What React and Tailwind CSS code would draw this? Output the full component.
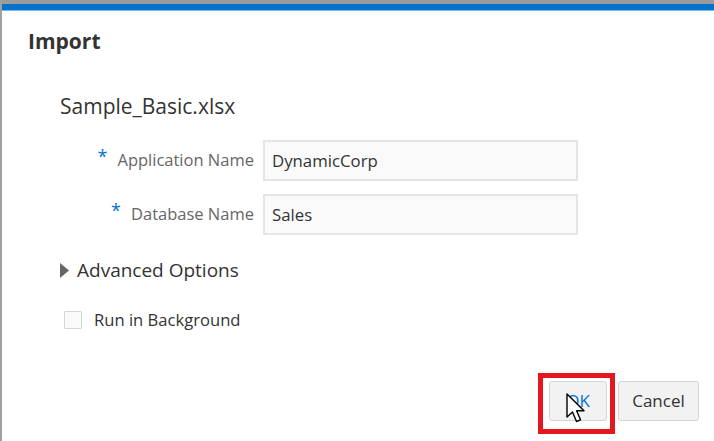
import React from 'react';

function Field({ label, value }) {
  return (
    <div className="flex items-center">
      <div className="w-[203px] flex justify-end items-center pr-[9px]">
        <span className="text-[18px] leading-none text-[#0572ce] mr-[10px] -mt-[10px]">*</span>
        <span className="text-[16.5px] text-[#666]">{label}</span>
      </div>
      <div className="w-[315px] h-[41px] bg-[#fafafa] border-2 border-[#e4e6e6] flex items-center px-[7px] text-[16.8px] text-[#333]">
        {value}
      </div>
    </div>
  );
}

function Cursor() {
  return (
    <svg className="absolute left-[23px] top-[15px]" width="22" height="32" viewBox="0 0 22 32">
      <path d="M1 1 L1 24 L6.5 19 L10.5 28.5 L14.5 26.8 L10.6 17.8 L18 17.8 Z" fill="#fff" stroke="#000" strokeWidth="1.4" strokeLinejoin="round" />
    </svg>
  );
}

export default function App() {
  return (
    <div className="w-[714px] h-[441px] bg-white border-l-2 border-[#a0a0a0] flex flex-col overflow-hidden" style={{ fontFamily: '"Open Sans", "Noto Sans", sans-serif' }}>
      <div className="h-[4px] bg-[#9b9b9b] -ml-[2px]"></div>
      <div className="h-[7px] bg-[#0572ce] border-b border-[#7fb4e6]"></div>
      <div className="pl-[26px] pt-[17px] text-[21px] font-bold text-[#333] leading-[26px]">Import</div>
      <div className="pl-[58px] pt-[38px] text-[21px] text-[#333] leading-[28px]">Sample_Basic.xlsx</div>
      <div className="pl-[58px] pt-[20px] flex flex-col gap-[13px]">
        <Field label="Application Name" value="DynamicCorp" />
        <Field label="Database Name" value="Sales" />
      </div>
      <div className="pl-[58px] pt-[22px] h-[48px] flex items-center gap-[8px]">
        <svg width="9" height="15" viewBox="0 0 9 15"><path d="M0 0 L9 7.5 L0 15 Z" fill="#666" /></svg>
        <span className="text-[19px] leading-[26px] text-[#333]">Advanced Options</span>
      </div>
      <div className="pl-[62px] pt-[25px] flex items-center gap-[12px]">
        <div className="w-[18px] h-[18px] border border-[#d6d6d6] bg-[#fafafa] rounded-[1px]"></div>
        <span className="text-[16.6px] leading-[24px] text-[#333]">Run in Background</span>
      </div>
      <div className="flex-1"></div>
      <div className="flex justify-end items-start pr-[15px] pb-[7px] gap-[3px]">
        <div className="relative border-[5px] border-[#e4171f] pl-[6px] pr-[3px] pt-[3px] pb-[8px]">
          <div className="w-[58px] h-[40px] bg-[#f2f2f2] border border-[#d4d4d4] rounded-[3px] flex items-center justify-center text-[17px] text-[#0572ce]">OK</div>
          <Cursor />
        </div>
        <div className="mt-[8px] w-[81px] h-[40px] bg-[#f2f2f2] border border-[#d4d4d4] rounded-[3px] flex items-center justify-center text-[17px] text-[#333]">Cancel</div>
      </div>
    </div>
  );
}
